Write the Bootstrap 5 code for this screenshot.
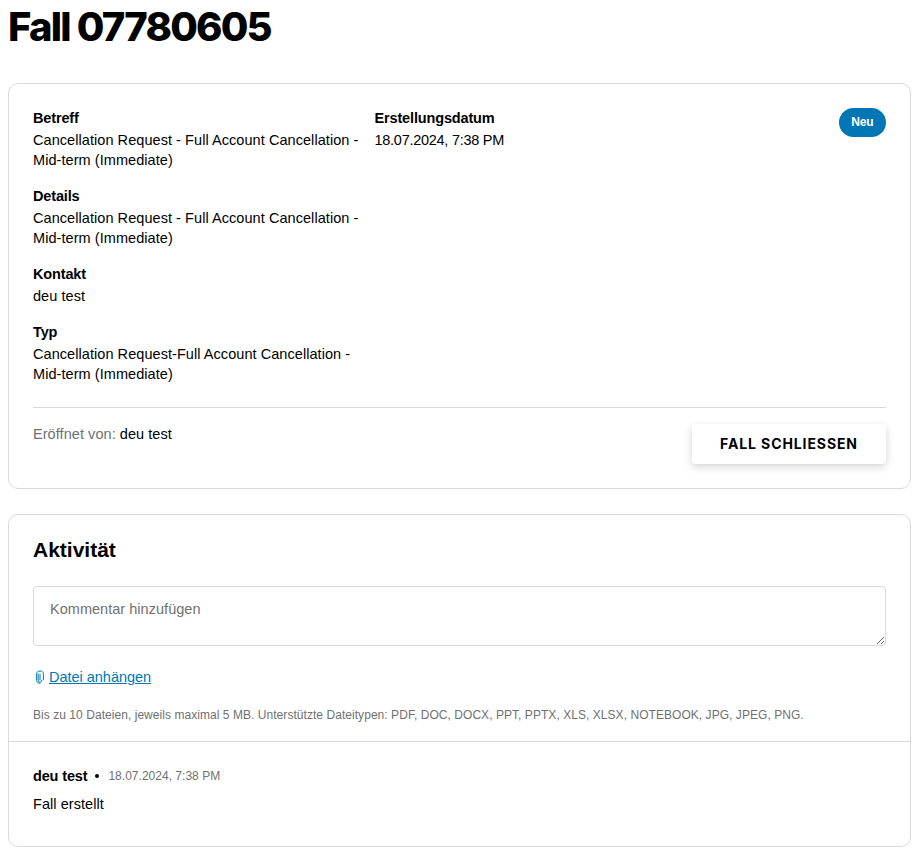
<!DOCTYPE html>
<html lang="de">
<head>
<meta charset="utf-8">
<title>Fall 07780605</title>
<link href="https://cdn.jsdelivr.net/npm/bootstrap@5.3.0/dist/css/bootstrap.min.css" rel="stylesheet">
<style>
html,body{height:858px;overflow:hidden}
body{font-family:"Liberation Sans",Arial,sans-serif;font-size:14.5px;line-height:20px;color:#000;background:#fff;margin:0;padding:0 2px 0 8px}
.page-title{font-family:Inter,"Liberation Sans",sans-serif;font-size:40px;line-height:44px;font-weight:800;letter-spacing:-1.82px;margin:0;padding-top:5px;height:83px}
.case-box{border:1px solid #d8dada;border-radius:10px;background:#fff}
.case-top{padding:24px 24px 0}
.fields{width:683px}
.field-col-a{width:341.5px;padding-right:10px}
.fld{margin-bottom:16px}
.fld-label{font-weight:700;letter-spacing:-.15px;margin-bottom:2px}
.fld-val{letter-spacing:.06px}
.date-val{letter-spacing:-.27px}
.status-pill{background:#0077b4;color:#fff;font-size:12px;font-weight:700;line-height:16px;padding:6px 12.5px 7px;border-radius:15px;letter-spacing:-.1px;height:29px}
.case-foot{margin:7px 24px 0;border-top:1px solid #d8dada;padding:16px 0 24px}
.muted-txt{color:#6f7171}
.close-btn{background:#fff;color:#000;border:0;border-radius:4px;font-family:Inter,sans-serif;font-size:14px;font-weight:700;letter-spacing:.9px;height:40px;width:194px;padding:0 0 2px;box-shadow:0 3px 8px rgba(0,0,0,.17)}
.close-btn:hover{background:#fff;color:#000}
.activity{margin-top:25px;height:333px}
.act-head{padding:23px 24px 0}
.act-title{font-size:21px;line-height:24px;font-weight:700;margin:0 0 24px}
.comment-box{display:block;width:100%;height:60px;border:1px solid #d8dada;border-radius:4px;padding:12px 16px;font-size:14.5px;line-height:20px;letter-spacing:.03px;font-family:inherit}
.comment-box::placeholder{color:#6f7171;opacity:1}
.attach{margin-top:21px;height:20px;padding-left:2px}
.attach a{color:#0077b4;letter-spacing:-.02px}
.hint{font-size:12px;line-height:16px;color:#6f7171;margin-top:20px;letter-spacing:.05px}
.entry{border-top:1px solid #d8dada;margin-top:18px;padding:24px 24px 0}
.entry-meta{font-size:12px;color:#6f7171;letter-spacing:.02px}
.entry-name{font-weight:700;font-size:14.5px;color:#000;letter-spacing:-.15px}
.entry-dot{width:4px;height:4px;border-radius:50%;background:#000;margin:0 9px 0 8px}
.entry-body{margin-top:8px;letter-spacing:.06px}
</style>
</head>
<body>
<h1 class="page-title">Fall 07780605</h1>

<section class="case-box">
  <div class="case-top d-flex justify-content-between align-items-start">
    <div class="fields d-flex">
      <div class="field-col-a">
        <div class="fld"><div class="fld-label">Betreff</div><div class="fld-val">Cancellation Request - Full Account Cancellation - Mid-term (Immediate)</div></div>
        <div class="fld"><div class="fld-label">Details</div><div class="fld-val">Cancellation Request - Full Account Cancellation - Mid-term (Immediate)</div></div>
        <div class="fld"><div class="fld-label">Kontakt</div><div class="fld-val">deu test</div></div>
        <div class="fld"><div class="fld-label">Typ</div><div class="fld-val">Cancellation Request-Full Account Cancellation - Mid-term (Immediate)</div></div>
      </div>
      <div>
        <div class="fld-label">Erstellungsdatum</div>
        <div class="fld-val date-val">18.07.2024, 7:38 PM</div>
      </div>
    </div>
    <span class="status-pill">Neu</span>
  </div>
  <div class="case-foot d-flex justify-content-between align-items-start">
    <div class="fld-val"><span class="muted-txt">Eröffnet von:</span> deu test</div>
    <button type="button" class="btn close-btn">FALL SCHLIESSEN</button>
  </div>
</section>

<section class="case-box activity">
  <div class="act-head">
    <h2 class="act-title">Aktivität</h2>
    <textarea class="comment-box" placeholder="Kommentar hinzufügen"></textarea>
    <div class="attach d-flex align-items-center gap-1">
      <svg width="10" height="14" viewBox="0 0 10 14" fill="none" stroke="#0077b4" stroke-width="1" stroke-linecap="round"><path d="M5 4v6M3.2 4v6.2c0 1.2.7 2 1.8 2s1.8-.8 1.8-2"/><path d="M8.4 9.8V3.8C8.4 2 7 1 5 1S1.6 2 1.6 3.8v6.6c0 1.6 1.4 2.9 3.4 2.9"/></svg>
      <a href="#">Datei anhängen</a>
    </div>
    <div class="hint">Bis zu 10 Dateien, jeweils maximal 5 MB. Unterstützte Dateitypen: PDF, DOC, DOCX, PPT, PPTX, XLS, XLSX, NOTEBOOK, JPG, JPEG, PNG.</div>
  </div>
  <div class="entry">
    <div class="entry-meta d-flex align-items-center"><span class="entry-name">deu test</span><span class="entry-dot"></span><span>18.07.2024, 7:38 PM</span></div>
    <div class="entry-body">Fall erstellt</div>
  </div>
</section>
<script src="https://cdn.jsdelivr.net/npm/bootstrap@5.3.0/dist/js/bootstrap.bundle.min.js"></script>
</body>
</html>
